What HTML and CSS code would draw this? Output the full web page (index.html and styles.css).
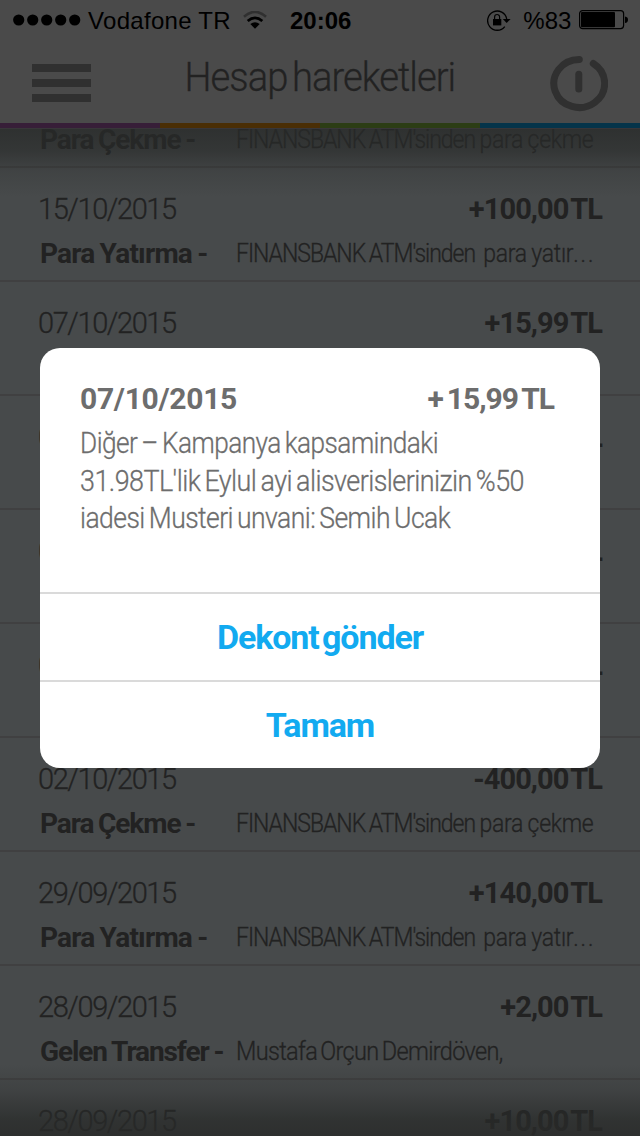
FILE: index.html
```html
<!DOCTYPE html>
<html lang="tr">
<head>
    <meta charset="UTF-8">
    <meta name="viewport" content="width=device-width, initial-scale=1.0">
    <title>Hesap hareketleri</title>
    <link rel="stylesheet" href="styles.css">
</head>
<body>
    <div class="screen">
        <header>
            <div class="status-bar">
                <svg class="signal" width="68" height="12" viewBox="0 0 68 12">
                    <circle cx="5.7" cy="6" r="5.6"/>
                    <circle cx="19.7" cy="6" r="5.6"/>
                    <circle cx="33.7" cy="6" r="5.6"/>
                    <circle cx="47.7" cy="6" r="5.6"/>
                    <circle cx="61.7" cy="6" r="5.6"/>
                </svg>
                <span class="carrier">Vodafone TR</span>
                <svg class="wifi" width="24" height="18" viewBox="0 0 24 18">
                    <path d="M1 5.8Q12-4 23 5.8" fill="none" stroke="#303030" stroke-width="2.6"/>
                    <path d="M4.7 10Q12 3.8 19.3 10" fill="none" stroke="#000" stroke-width="2.8"/>
                    <path d="M7.3 13Q12 9.3 16.7 13L12 17.8z"/>
                </svg>
                <span class="clock">20:06</span>
                <svg class="lock" width="24" height="21" viewBox="0 0 24 21">
                    <path d="M17.8 16.6A9.6 9.6 0 1 1 19.7 9" fill="none" stroke="#000" stroke-width="1.3"/>
                    <path d="M15.8 9h7.8L19.7 13z"/>
                    <rect x="6" y="9" width="8.3" height="6.4"/>
                    <path d="M7.6 9.5V7a2.5 2.5 0 0 1 5 0v2.5" fill="none" stroke="#000" stroke-width="1.2"/>
                </svg>
                <span class="percent">%83</span>
                <svg class="battery" width="50" height="20" viewBox="0 0 50 20">
                    <rect x=".6" y=".6" width="44" height="18" rx="3" fill="none" stroke="#000" stroke-width="1.2"/>
                    <rect x="2" y="2" width="34" height="15.2" rx="1"/>
                    <path d="M46 6.5q3 .5 3 3.3t-3 3.3z"/>
                </svg>
            </div>
            <div class="nav">
                <div class="menu-button">
                    <span></span>
                    <span></span>
                    <span></span>
                </div>
                <h1>Hesap hareketleri</h1>
                <svg class="power" width="58" height="56" viewBox="0 0 58 56">
                    <path d="M29.3 3.5A25.4 24 0 1 0 43.3 7.5" />
                    <path d="M28.8 18.2v14.8"/>
                </svg>
            </div>
            <div class="stripes">
                <div class="purple"></div>
                <div class="orange"></div>
                <div class="green"></div>
                <div class="blue"></div>
            </div>
        </header>

        <div class="list">
            <div class="row first">
                <div class="bottom"><span class="type t-narrow">Para Çekme -</span><span class="desc"><span class="bank">FINANSBANK ATM'sinden</span> para çekme</span></div>
            </div>
            <div class="row">
                <div class="top"><span class="date">15/10/2015</span><span class="amount">+100,00 TL</span></div>
                <div class="bottom"><span class="type">Para Yatırma -</span><span class="desc"><span class="bank">FINANSBANK ATM'sinden&nbsp;</span> para yatır<span class="dots">...</span></span></div>
            </div>
            <div class="row">
                <div class="top"><span class="date">07/10/2015</span><span class="amount">+15,99 TL</span></div>
            </div>
            <div class="row">
                <div class="top"><span class="date">07/10/2015</span><span class="amount">TL</span></div>
            </div>
            <div class="row">
                <div class="top"><span class="date">07/10/2015</span><span class="amount">TL</span></div>
            </div>
            <div class="row">
                <div class="top"><span class="date">07/10/2015</span><span class="amount">TL</span></div>
            </div>
            <div class="row">
                <div class="top"><span class="date">02/10/2015</span><span class="amount">-400,00 TL</span></div>
                <div class="bottom"><span class="type t-narrow">Para Çekme -</span><span class="desc"><span class="bank">FINANSBANK ATM'sinden</span> para çekme</span></div>
            </div>
            <div class="row">
                <div class="top"><span class="date">29/09/2015</span><span class="amount">+140,00 TL</span></div>
                <div class="bottom"><span class="type">Para Yatırma -</span><span class="desc"><span class="bank">FINANSBANK ATM'sinden&nbsp;</span> para yatır<span class="dots">...</span></span></div>
            </div>
            <div class="row">
                <div class="top"><span class="date">28/09/2015</span><span class="amount">+2,00 TL</span></div>
                <div class="bottom"><span class="type t-narrow">Gelen Transfer -</span><span class="desc d-name">Mustafa Orçun Demirdöven,</span></div>
            </div>
            <div class="row">
                <div class="top"><span class="date">28/09/2015</span><span class="amount">+10,00 TL</span></div>
            </div>
        </div>

        <div class="shade"></div>

        <div class="modal">
            <div class="modal-body">
                <div class="modal-head"><span class="modal-date">07/10/2015</span><span class="modal-amount">+ 15,99 TL</span></div>
                <p><span class="l1">Diğer – Kampanya kapsamindaki</span> <span class="l2">31.98TL'lik Eylul ayi alisverislerinizin %50</span> <span class="l3">iadesi Musteri unvani: Semih Ucak</span></p>
            </div>
            <button>Dekont gönder</button>
            <button>Tamam</button>
        </div>
    </div>
</body>
</html>
```
FILE: styles.css
```css
body {
    margin: 0;
    font-family: Roboto, "Liberation Sans", sans-serif;
    background-color: #474a4b;
}
.screen {
    position: relative;
    width: 640px;
    height: 1136px;
    overflow: hidden;
    display: flex;
    flex-direction: column;
    color: #222;
}
header {
    flex: none;
    background-color: #4a4a4a;
    border-bottom: 1px solid #383639;
}
/* Status bar */
.status-bar {
    display: flex;
    align-items: center;
    height: 40px;
    padding: 0 11px 0 13px;
    box-sizing: border-box;
    font-family: "Liberation Sans", sans-serif;
    font-size: 24px;
    line-height: 42px;
    color: #000;
    white-space: nowrap;
}
.status-bar svg {
    flex: none;
}
.status-bar span {
    padding-top: 1px;
}
.carrier {
    width: 143px;
    margin-left: 7px;
    letter-spacing: 0.3px;
}
.wifi {
    margin-left: 12px;
}
.clock {
    width: 62px;
    margin-left: 23px;
    font-weight: bold;
}
.lock {
    margin-left: 136px;
}
.percent {
    width: 50px;
    margin-left: 12px;
}
.battery {
    margin-left: 8px;
}
/* Title bar */
.nav {
    display: flex;
    justify-content: space-between;
    height: 83px;
    padding: 0 32px;
}
.menu-button {
    display: flex;
    flex-direction: column;
    gap: 7px;
    width: 59px;
    margin-top: 24px;
}
.menu-button span {
    height: 8px;
    background-color: #303030;
}
h1 {
    margin: 13px 2px 0 0;
    font-size: 40px;
    line-height: 50px;
    font-weight: 300;
    letter-spacing: -1px;
    word-spacing: -4px;
    white-space: nowrap;
    transform: scaleX(0.954);
    -webkit-text-stroke: 0.3px;
}
.power {
    margin-top: 16px;
}
.power path {
    fill: none;
    stroke: #303030;
    stroke-width: 7;
    stroke-linecap: round;
}
.stripes {
    display: flex;
    height: 5px;
}
.stripes div {
    flex: 1;
}
.purple {
    background-color: #371e38;
}
.orange {
    background-color: #4a2e05;
}
.green {
    background-color: #2c3d15;
}
.blue {
    background-color: #05344a;
}
/* Transactions */
.list {
    flex: 1;
    overflow: hidden;
}
.row {
    height: 114px;
    padding: 19px 38px 0;
    box-sizing: border-box;
    border-bottom: 2px solid #404041;
}
/* Scrolled under the header, only the second line is left */
.row.first {
    display: flex;
    height: 39px;
    padding-top: 0;
}
.first .bottom {
    margin-top: -11px;
}
.top {
    display: flex;
    justify-content: space-between;
    height: 45px;
    font-size: 29px;
    line-height: 44px;
}
.date {
    font-weight: 300;
    letter-spacing: -1.4px;
    -webkit-text-stroke: 0.3px;
}
.amount {
    font-weight: 700;
    letter-spacing: -0.9px;
    word-spacing: -4px;
}
.bottom {
    display: flex;
    height: 44px;
    padding-left: 2px;
    line-height: 44px;
    white-space: nowrap;
}
.type {
    flex: none;
    width: 196px;
    font-size: 28px;
    font-weight: 700;
    letter-spacing: -0.8px;
    word-spacing: -1px;
}
.t-narrow {
    letter-spacing: -1.1px;
}
.desc {
    font-size: 25px;
    font-weight: 300;
    letter-spacing: -0.3px;
    word-spacing: -1px;
    transform: scaleX(0.92);
    transform-origin: left;
    -webkit-text-stroke: 0.3px;
}
.d-name {
    letter-spacing: -0.7px;
    word-spacing: -2px;
    transform: scaleX(0.94);
}
.bank {
    letter-spacing: -1.1px;
}
.dots {
    letter-spacing: 2px;
}
/* Soft shadows at the list edges */
.shade {
    position: absolute;
    top: 129px;
    left: 0;
    right: 0;
    bottom: 0;
    background: linear-gradient(rgba(40, 42, 41, 0.92), rgba(40, 42, 41, 0.72) 22px, rgba(40, 42, 41, 0.25) 42px, rgba(40, 42, 41, 0) 68px, rgba(40, 42, 41, 0) 935px, rgba(40, 42, 41, 0.3) 962px, rgba(40, 42, 41, 0.85) 990px, #292a29 1007px);
    opacity: 0.85;
}
/* Popup */
.modal {
    position: absolute;
    top: 348px;
    left: 40px;
    width: 560px;
    height: 420px;
    overflow: hidden;
    background-color: #fff;
    border-radius: 20px;
    color: #6d6d6d;
}
.modal-body {
    height: 244px;
    padding: 30px 46px 0 40px;
    box-sizing: border-box;
}
.modal-head {
    display: flex;
    justify-content: space-between;
    height: 42px;
    font-size: 30px;
    line-height: 42px;
    font-weight: 700;
}
.modal-date {
    letter-spacing: -0.3px;
}
.modal-amount {
    letter-spacing: -1px;
    word-spacing: -2.5px;
}
.modal p {
    margin: 5px 0 0;
    font-size: 29px;
    line-height: 37.5px;
    font-weight: 300;
    letter-spacing: -0.6px;
    word-spacing: -2px;
    white-space: nowrap;
    -webkit-text-stroke: 0.3px;
}
.modal p span {
    display: block;
    transform-origin: left;
}
.l1 {
    transform: scaleX(0.904);
}
.l2 {
    transform: scaleX(0.929);
}
.l3 {
    transform: scaleX(0.914);
}
.modal button {
    display: block;
    width: 100%;
    height: 88px;
    padding: 0;
    border: none;
    border-top: 2px solid #dadada;
    background: none;
    font-family: inherit;
    font-size: 34px;
    font-weight: 700;
    color: #12aaf0;
    letter-spacing: -1.1px;
    word-spacing: -4px;
}
```
